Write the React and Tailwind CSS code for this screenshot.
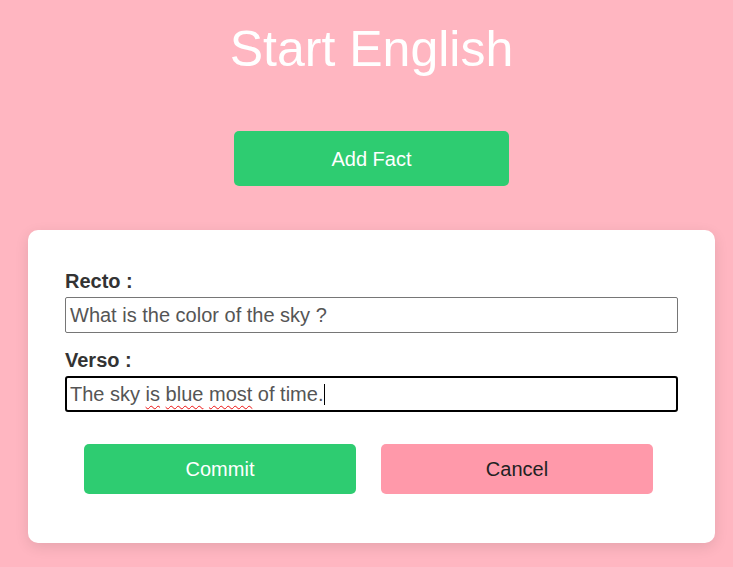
import React from 'react';

const font = { fontFamily: '"Liberation Sans", Arial, sans-serif' };

const Squiggle = ({ children }) => (
  <span className="underline decoration-wavy decoration-[#e11] decoration-1 underline-offset-[4px]">{children}</span>
);

const App = () => {
  return (
    <div className="min-h-screen bg-[#ffb6c1] pl-[10px] pb-6 font-['Liberation_Sans',Arial,sans-serif]" style={font}>
      <div className="flex flex-col items-center">
        {/* title */}
        <h1 className="pt-[21px] text-[50px] leading-[57px] text-white font-normal">Start English</h1>

        {/* add fact */}
        <button className="mt-[53px] w-[275px] h-[55px] rounded-[5px] bg-[#2ecc71] text-white text-[20px]">
          Add Fact
        </button>

        {/* form card */}
        <div className="mt-[44px] self-stretch mx-[18px] bg-white rounded-[10px] shadow-[0_4px_14px_rgba(0,0,0,0.1)] pt-[40px] pb-[49px] px-[37px]">
          <label className="block text-[20px] leading-[23px] font-bold text-[#333]">Recto :</label>
          <div className="mt-[4px] h-[36px] border border-[#767676] rounded-[2px] flex items-center px-[4px] text-[20px] text-[#555]">
            What is the color of the sky ?
          </div>

          <label className="block mt-[16px] text-[20px] leading-[23px] font-bold text-[#333]">Verso :</label>
          <div className="mt-[4px] h-[36px] border-2 border-black rounded-[3px] flex items-center px-[3px] text-[20px] text-[#555] whitespace-pre">
            <span>
              The sky <Squiggle>is</Squiggle> <Squiggle>blue</Squiggle> <Squiggle>most</Squiggle> of time.
            </span>
            <span className="inline-block w-px h-[21px] bg-black ml-px" />
          </div>

          {/* actions */}
          <div className="mt-[32px] flex gap-[25px] pl-[19px]">
            <button className="w-[272px] h-[50px] rounded-[5px] bg-[#2ecc71] text-white text-[20px]">Commit</button>
            <button className="w-[272px] h-[50px] rounded-[5px] bg-[#ff99aa] text-[#222] text-[20px]">Cancel</button>
          </div>
        </div>
      </div>
    </div>
  );
};

export default App;
